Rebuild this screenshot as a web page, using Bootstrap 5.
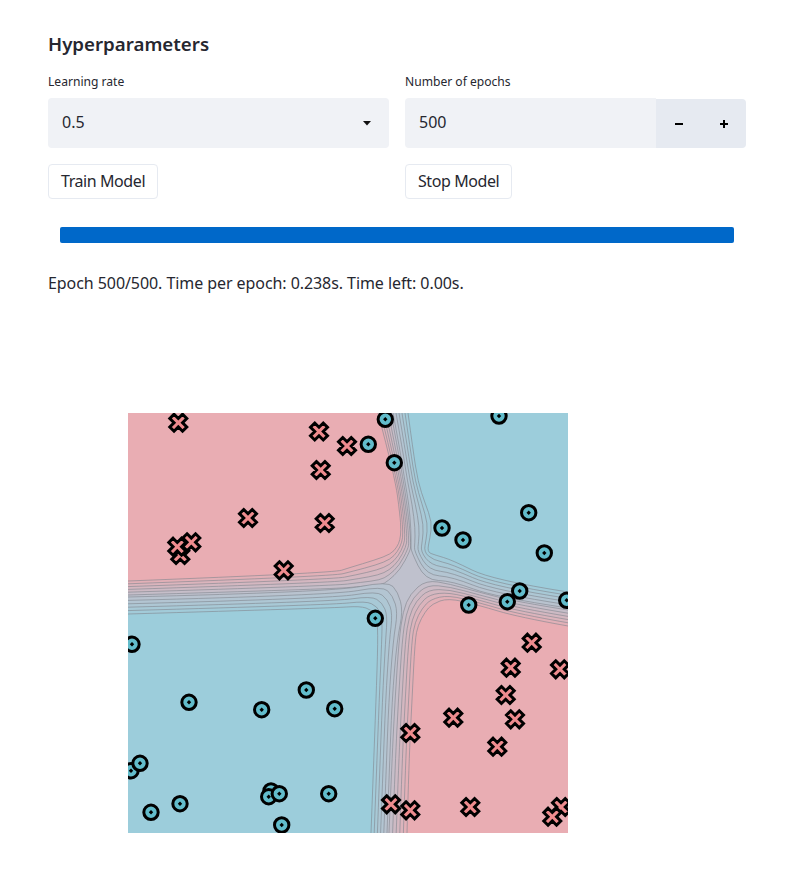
<!doctype html>
<html lang="en">
<head>
<meta charset="utf-8">
<title>Hyperparameters</title>
<link href="https://cdn.jsdelivr.net/npm/bootstrap@5.3.0/dist/css/bootstrap.min.css" rel="stylesheet">
<style>
body{background:#fff;color:#262730;font-family:"Noto Sans","Liberation Sans",sans-serif;font-size:16px}
.page-wrap{width:698px;margin-left:48px;padding-top:31px}
.sect-title{font-size:18.700px;font-weight:600;line-height:26px;margin:0 0 17px}
.field-label{display:block;font-size:12.100px;line-height:16px;margin:0 0 8px}
.soft-input.form-select,.soft-input.form-control{height:50px;background-color:#f0f2f6;border:0;border-radius:4px;color:#262730;font-size:16px;padding:0 14px 2px;box-shadow:none}
.soft-input.form-select{background-image:url("data:image/svg+xml,%3Csvg xmlns='http://www.w3.org/2000/svg' width='8' height='5'%3E%3Cpath d='M0 0h8L4 4.500z' fill='%23111'/%3E%3C/svg%3E");background-size:8px 5px;background-position:right 18px center}
.num-group .soft-input{border-radius:4px 0 0 4px}
.step-btn{width:45px;height:49px;margin-top:1px;margin-left:0!important;padding:0;background:#e6eaf1;border:0;border-radius:0;display:flex;align-items:center;justify-content:center}
.step-btn:last-child{border-radius:0 4px 4px 0}
.plain-btn{height:35px;padding:0 12px;font-size:16px;line-height:33px;letter-spacing:-.42px;color:#262730;background:#fff;border:1px solid #e6eaf1;border-radius:4px}
.btn-line{margin-top:16px}
.run-progress{height:16px;margin:28px 12px 0;background:#f0f2f6;border-radius:2px}
.run-progress .progress-bar{background:#0068c9}
.run-status{margin:28px 0 0;line-height:24px;letter-spacing:-.07px}
.plot-svg{display:block;margin:118px 0 0 80px}
</style>
</head>
<body>
<div class="page-wrap">
  <h2 class="sect-title">Hyperparameters</h2>
  <div class="row gx-3">
    <div class="col-6">
      <label class="field-label" for="lr">Learning rate</label>
      <select id="lr" class="form-select soft-input"><option>0.5</option></select>
      <div class="btn-line"><button type="button" class="btn plain-btn">Train Model</button></div>
    </div>
    <div class="col-6">
      <label class="field-label" for="ep">Number of epochs</label>
      <div class="input-group num-group">
        <input id="ep" class="form-control soft-input" value="500">
        <button type="button" class="btn step-btn" aria-label="minus"><svg width="8" height="8" viewBox="0 0 8 8"><rect y="3" width="8" height="2" fill="#000"/></svg></button>
        <button type="button" class="btn step-btn" aria-label="plus"><svg width="8" height="8" viewBox="0 0 8 8"><path d="M0 3h3V0h2v3h3v2H5v3H3V5H0z" fill="#000"/></svg></button>
      </div>
      <div class="btn-line"><button type="button" class="btn plain-btn">Stop Model</button></div>
    </div>
  </div>
  <div class="progress run-progress"><div class="progress-bar" style="width:100%"></div></div>
  <p class="run-status">Epoch 500/500. Time per epoch: 0.238s. Time left: 0.00s.</p>
  <svg class="plot-svg" width="440" height="420" viewBox="128 413 440 420">
    <defs>
      <g id="mk-x"><polygon points="-4.250,-8.500 0,-4.250 4.250,-8.500 8.500,-4.250 4.250,0 8.500,4.250 4.250,8.500 0,4.250 -4.250,8.500 -8.500,4.250 -4.250,0 -8.500,-4.250" fill="#ee8b8e" stroke="#000" stroke-width="3"/></g>
      <g id="mk-o"><circle r="7.200" fill="#62bccb" stroke="#000" stroke-width="3"/><path d="M0-2.200L2.200 0 0 2.200-2.200 0z" fill="#000"/></g>
    </defs>
    <rect x="128" y="413" width="440" height="420" fill="#bfc1cd"/>
    <g id="contours"></g>
    <g>
      <use href="#mk-x" x="178.300" y="422.700"/><use href="#mk-x" x="319" y="431.500"/><use href="#mk-x" x="347" y="446"/>
      <use href="#mk-x" x="320.700" y="470"/><use href="#mk-x" x="248" y="518"/><use href="#mk-x" x="324.700" y="523"/>
      <use href="#mk-x" x="180.300" y="555"/><use href="#mk-x" x="191.300" y="542.300"/><use href="#mk-x" x="177.300" y="546.700"/>
      <use href="#mk-x" x="283.700" y="570.300"/><use href="#mk-x" x="531.700" y="642.700"/><use href="#mk-x" x="510.700" y="667.700"/>
      <use href="#mk-x" x="560" y="669.300"/><use href="#mk-x" x="505.700" y="695"/><use href="#mk-x" x="453.300" y="717.700"/>
      <use href="#mk-x" x="515" y="719.300"/><use href="#mk-x" x="410.300" y="733"/><use href="#mk-x" x="497.300" y="746.700"/>
      <use href="#mk-x" x="391" y="804.300"/><use href="#mk-x" x="410.300" y="810.300"/><use href="#mk-x" x="470.300" y="807"/>
      <use href="#mk-x" x="561" y="807"/><use href="#mk-x" x="552.300" y="816.700"/>
    </g>
    <g>
      <use href="#mk-o" x="385.300" y="419.300"/><use href="#mk-o" x="499" y="416"/><use href="#mk-o" x="368.300" y="444.300"/>
      <use href="#mk-o" x="394.300" y="462.700"/><use href="#mk-o" x="528.700" y="512.700"/><use href="#mk-o" x="442" y="528"/>
      <use href="#mk-o" x="463" y="540"/><use href="#mk-o" x="544.300" y="553"/><use href="#mk-o" x="519.700" y="591"/>
      <use href="#mk-o" x="507.300" y="601.700"/><use href="#mk-o" x="468.700" y="605"/><use href="#mk-o" x="566.700" y="600.300"/>
      <use href="#mk-o" x="375.300" y="618.300"/><use href="#mk-o" x="132" y="644.300"/><use href="#mk-o" x="189" y="702.300"/>
      <use href="#mk-o" x="306.300" y="690"/><use href="#mk-o" x="261.700" y="709.700"/><use href="#mk-o" x="334.700" y="708.700"/>
      <use href="#mk-o" x="131" y="770.700"/><use href="#mk-o" x="140" y="763.300"/><use href="#mk-o" x="271" y="791"/>
      <use href="#mk-o" x="268.700" y="796.700"/><use href="#mk-o" x="279.300" y="793.700"/><use href="#mk-o" x="328.700" y="793.700"/>
      <use href="#mk-o" x="180" y="803.700"/><use href="#mk-o" x="151" y="812.300"/><use href="#mk-o" x="281.700" y="825"/>
    </g>
  </svg>
</div>
<script src="https://cdn.jsdelivr.net/npm/bootstrap@5.3.0/dist/js/bootstrap.bundle.min.js"></script>
<script>
(function(){
  var lilac=[191,193,205],pink=[233,173,179],blue=[156,205,219];
  var fam=[
   {c:pink,corner:[[128,413]],
    o:[[128,581],[333,573],[350,567.5],[375,560],[391,554],[397,547],[400,540],[401,530],[400,515],[395,477],[378,413]],
    i:[[128,595],[333,589],[365,586],[381,585],[388,581],[400,570],[410,551],[411,545],[409,520],[403,477],[391,413]]},
   {c:blue,corner:[[568,413]],
    o:[[408,413],[413,450],[418,482],[425,503],[432,522],[430,538],[427,552],[435,555],[452,560],[492,580],[568,592]],
    i:[[393,413],[400,450],[405,482],[409,505],[411,530],[411,545],[411,551],[425,580],[452,581],[495,597],[568,608]]},
   {c:pink,corner:[[568,833]],
    o:[[568,626],[518,617],[478,605],[448,598],[432,604],[425,612],[418,625],[415,640],[412,700],[409,760],[407,833]],
    i:[[568,610],[518,602],[478,592],[450,584],[426,580],[410,594],[403,611],[399,640],[395,700],[392,760],[389,833]]},
   {c:blue,corner:[[128,833]],
    o:[[371,833],[373,780],[376,700],[378,640],[377,618],[372,610],[360,606],[333,608],[128,614]],
    i:[[387,833],[389,780],[392,700],[397,640],[403,611],[398,592],[388,581],[333,592],[128,597]]}
  ];
  var n=6,h='';
  fam.forEach(function(f){
    for(var k=0;k<n;k++){
      var t=k/(n-1),ft=(k+1)/n,pts=f.i.map(function(p,j){return [p[0]+(f.o[j][0]-p[0])*t,p[1]+(f.o[j][1]-p[1])*t];});
      var d='M'+pts[0].join(' ');
      for(var j=1;j<pts.length-1;j++){
        var nx=j===pts.length-2?pts[j+1]:[(pts[j][0]+pts[j+1][0])/2,(pts[j][1]+pts[j+1][1])/2];
        d+='Q'+pts[j].join(' ')+' '+nx.join(' ');
      }
      var col=lilac.map(function(v,x){return Math.round(v+(f.c[x]-v)*ft);});
      h+='<path d="'+d+'L'+f.corner[0].join(' ')+'Z" fill="rgb('+col.join(',')+')" stroke="none"/>';
      h+='<path d="'+d+'" fill="none" stroke="#80858e" stroke-opacity=".6" stroke-width="1"/>';
    }
  });
  document.getElementById('contours').innerHTML=h;
})();
</script>
</body>
</html>
